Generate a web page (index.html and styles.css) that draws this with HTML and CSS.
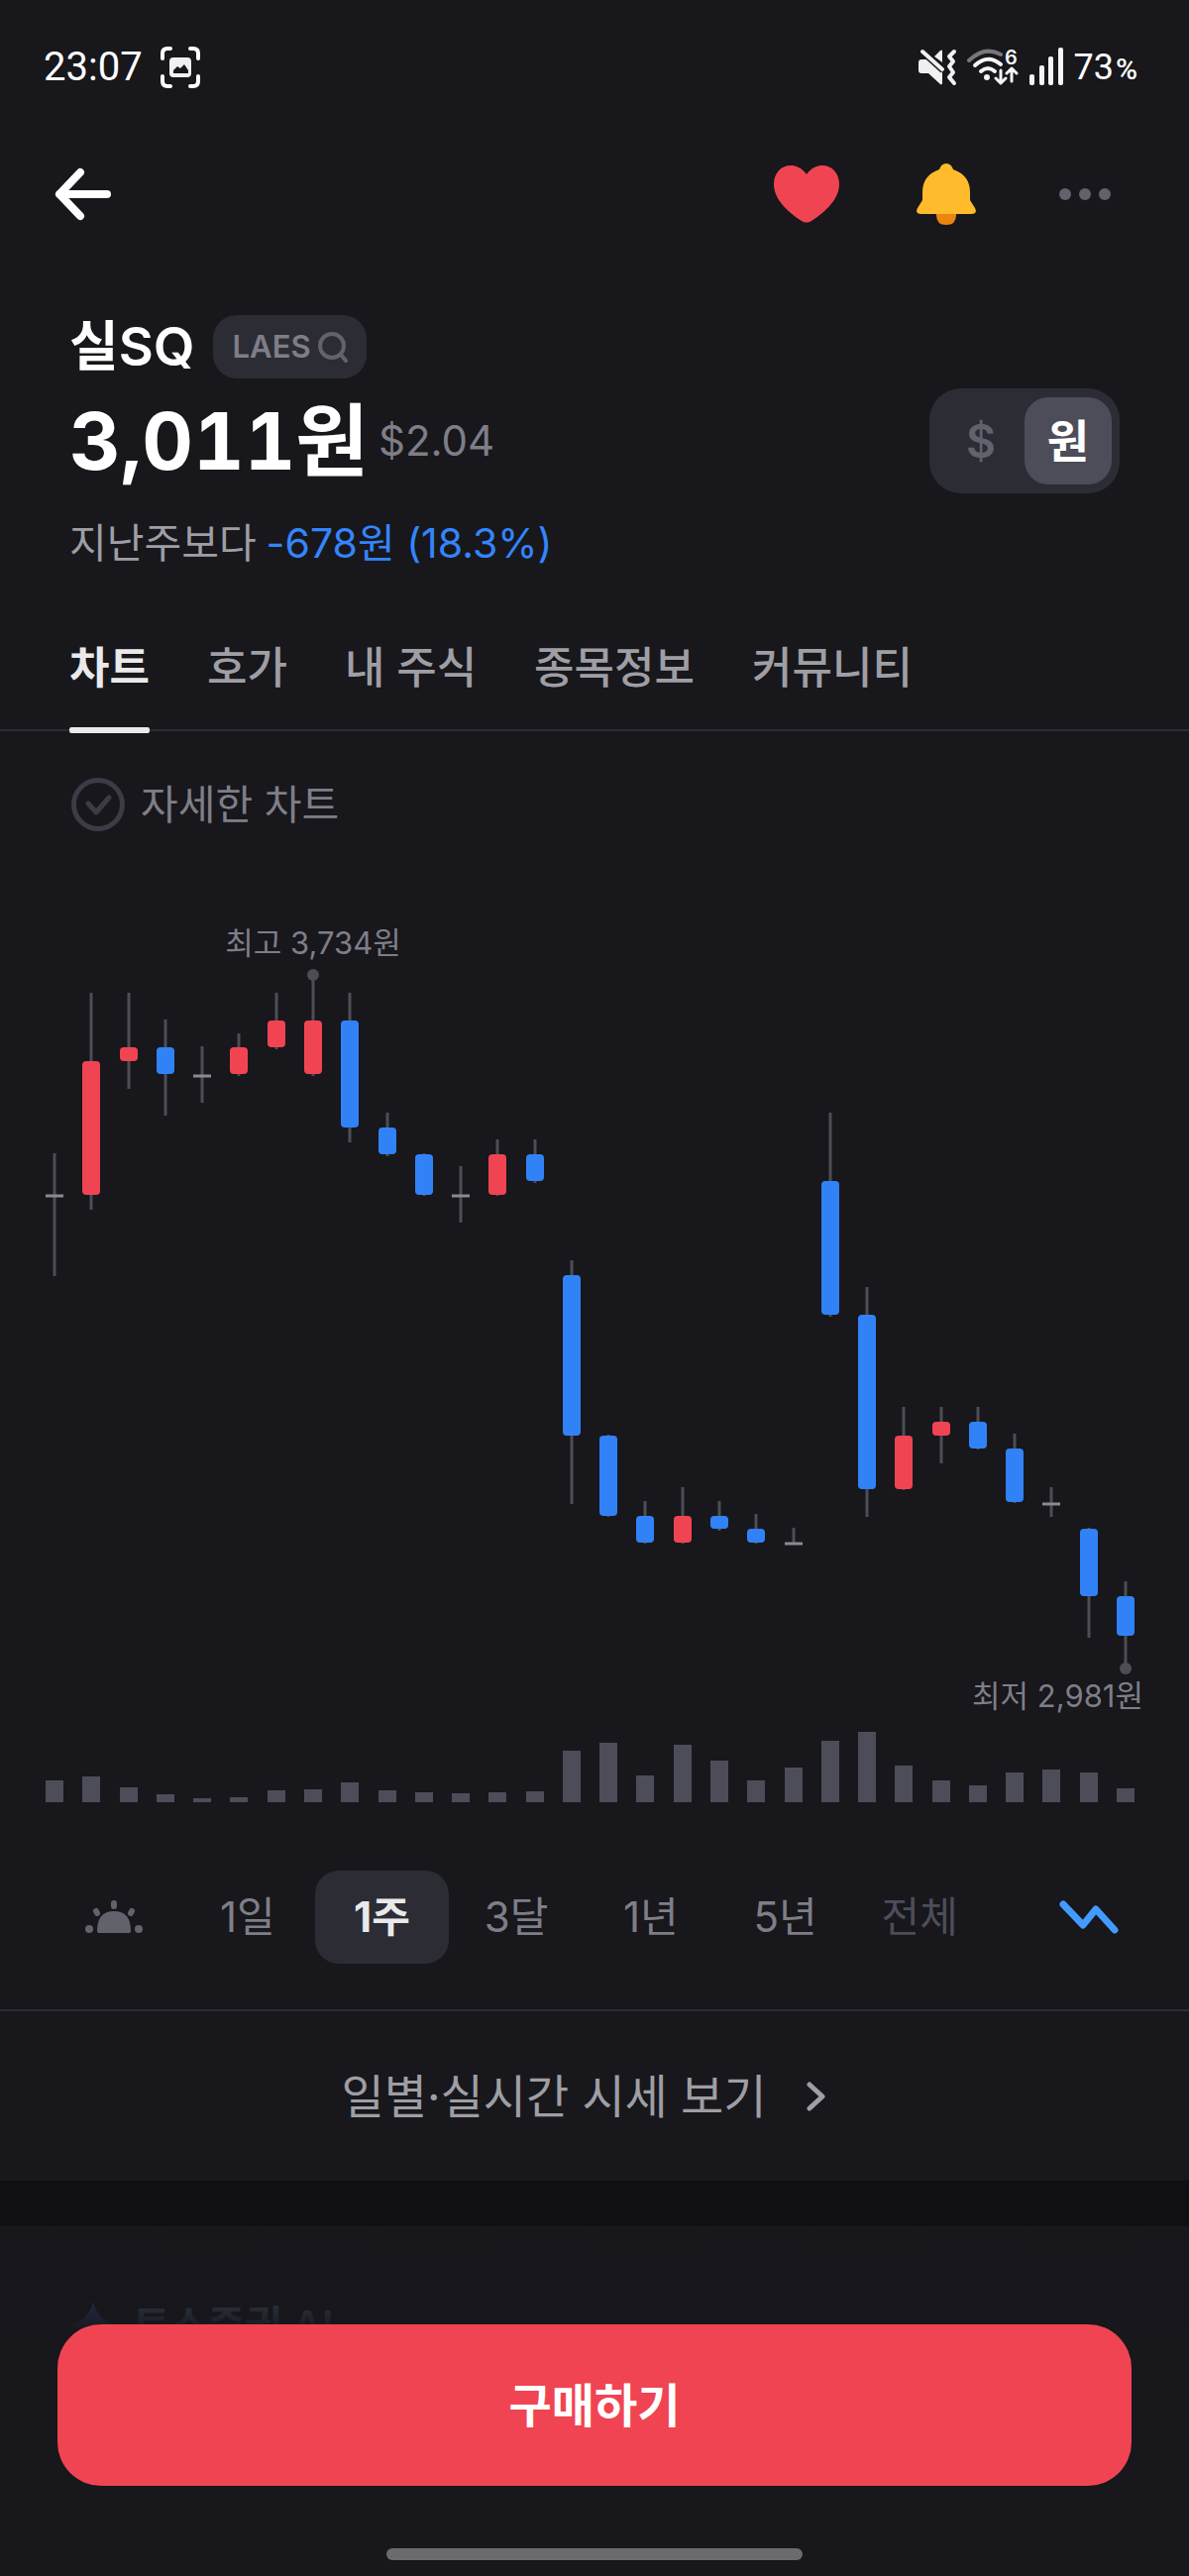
FILE: index.html
```html
<!DOCTYPE html>
<html lang="ko">
<head>
<meta charset="utf-8">
<meta name="viewport" content="width=device-width, initial-scale=1">
<title>실SQ</title>
<link rel="stylesheet" href="styles.css">
</head>
<body>
<div class="status">
  <div class="status-group">
    <span class="clock">23:07</span>
    <svg width="40" height="42" viewBox="0 0 40 42" fill="none" aria-hidden="true">
      <path d="M2 12V7q0-5 5-5h3M30 2h3q5 0 5 5v5M38 30v5q0 5-5 5h-3M10 40H7q-5 0-5-5v-5" stroke="#fff" stroke-width="4" stroke-linecap="round"/>
      <rect x="9" y="11" width="22" height="20" rx="4" fill="#f0f0f0"/>
      <path d="M13 27v-3l4-4 3 2 4-4 4 6v3z" fill="#17171c"/>
    </svg>
  </div>
  <div class="status-group status-right">
    <svg width="40" height="38" viewBox="0 0 40 38" aria-hidden="true">
      <path d="M1 14q0-3 3-3h6L25 20v15q0 2-2 1L11 25H4q-3 0-3-3zM25 2v12l-8-6 6-6q2-1 2 0z" fill="#f0f0f0"/>
      <path d="M5 3l21 19" stroke="#17171c" stroke-width="7"/>
      <path d="M5 3l20 18M37 3l-5 5 4 5-4 5 4 6-4 5 5 6" fill="none" stroke="#f0f0f0" stroke-width="4" stroke-linecap="round" stroke-linejoin="round"/>
    </svg>
    <svg width="54" height="46" viewBox="0 -4 54 46" fill="none" stroke-linecap="round" aria-hidden="true">
      <path d="M3 12Q19-3 35 6" stroke="#77777b" stroke-width="4"/>
      <path d="M9 17q13-12 26-1M15 23q7-6 14 0" stroke="#f5f5f5" stroke-width="4"/>
      <circle cx="21" cy="29" r="3" fill="#f5f5f5"/>
      <path d="M35 22v12M30 30l5 5 5-5M46 33V21M41 25l5-5 5 5" stroke="#f5f5f5" stroke-width="3" stroke-linejoin="round"/>
      <text class="wifi-gen" x="39" y="16">6</text>
    </svg>
    <svg width="36" height="40" viewBox="0 0 36 40" fill="#f5f5f5" aria-hidden="true">
      <rect x="1" y="27" width="5" height="11" rx="2"/><rect x="11" y="18" width="5" height="20" rx="2"/><rect x="20" y="9" width="5" height="29" rx="2"/><rect x="30" y="0" width="5" height="38" rx="2"/>
    </svg>
    <span class="battery">73<small>%</small></span>
  </div>
</div>

<header class="topbar">
  <button class="icon-btn" type="button" aria-label="뒤로">
    <svg width="60" height="56" viewBox="0 0 60 56" fill="none" stroke="#fff" stroke-width="8" stroke-linecap="round" stroke-linejoin="round"><path d="M27 6L6 28l21 22M6 28h48"/></svg>
  </button>
  <div class="topbar-actions">
    <button class="icon-btn" type="button" aria-label="관심">
      <svg width="66" height="58" viewBox="0 0 66 58"><path d="M33 9C38 2 44 0 49 0C59 0 66 8 66 19C66 34 52 47 38 56Q33 59 28 56C14 47 0 34 0 19C0 8 7 0 17 0C22 0 28 2 33 9Z" fill="#f04452"/></svg>
    </button>
    <button class="icon-btn" type="button" aria-label="알림">
      <svg width="60" height="62" viewBox="0 0 60 62"><path d="M20 48h20v4q0 10-10 10t-10-10z" fill="#ea860f"/><path d="M23 6q2-6 7-6t7 6Q54 12 54 29v8l5 8q3 6-4 6H5q-7 0-4-6l5-8v-8Q6 12 23 6z" fill="#ffbb2b"/></svg>
    </button>
    <button class="icon-btn" type="button" aria-label="더보기">
      <svg width="58" height="12" viewBox="-6 0 58 12" fill="#62626d"><circle cx="6" cy="6" r="6"/><circle cx="26" cy="6" r="6"/><circle cx="46" cy="6" r="6"/></svg>
    </button>
  </div>
</header>

<main>
  <section class="summary">
    <div class="name-row">
      <h1>실SQ</h1>
      <button class="ticker" type="button">LAES
        <svg width="32" height="32" viewBox="0 0 32 32" fill="none" stroke="#62626d" stroke-width="4" stroke-linecap="round" aria-hidden="true"><circle cx="15" cy="15" r="12"/><path d="M24 24l5 6"/></svg>
      </button>
    </div>
    <div class="price-row">
      <p class="price">3,011원 <span class="usd">$2.04</span></p>
      <div class="currency" role="group" aria-label="통화">
        <button type="button" aria-pressed="false">$</button>
        <button type="button" class="on" aria-pressed="true">원</button>
      </div>
    </div>
    <p class="change"><span>지난주보다</span><span class="down">-678원 (18.3%)</span></p>
  </section>

  <nav class="tabs">
    <a class="on" href="#chart">차트</a>
    <a href="#quote">호가</a>
    <a href="#mine">내 주식</a>
    <a href="#info">종목정보</a>
    <a href="#community">커뮤니티</a>
  </nav>

  <section id="chart">
    <label class="detail">
      <span class="check">
        <input type="checkbox">
        <svg width="28" height="22" viewBox="0 0 28 22" fill="none" stroke="#3c3c47" stroke-width="5" stroke-linecap="round" stroke-linejoin="round" aria-hidden="true"><path d="M4 10l8 9L25 4"/></svg>
      </span>
      자세한 차트
    </label>

    <svg class="plot" viewBox="0 840 1200 1000" role="img" aria-label="1주 시세 차트">
      <path class="wick" d="M55 1164V1288M92 1002V1221M130 1002V1099M167 1029V1126M204 1056V1113M241 1043V1086M279 1002V1059M316 984V1086M353 1002V1153M391 1123V1167M428 1164V1207M465 1177V1234M502 1150V1207M540 1150V1194M577 1272V1518M614 1448V1531M651 1515V1558M689 1501V1558M726 1515V1545M763 1528V1558M801 1542V1558M838 1123V1329M875 1299V1531M912 1420V1504M950 1420V1477M987 1420V1463M1024 1447V1517M1061 1501V1531M1099 1542V1653M1136 1596V1684"/>
      <circle class="dot" cx="316" cy="984" r="6"/>
      <circle class="dot" cx="1136" cy="1684" r="6"/>
      <path class="flat" d="M46 1207h18M195 1086h18M456 1207h18M792 1558h18M1052 1518h18"/>
      <g class="up">
        <rect x="83" y="1071" width="18" height="135" rx="4"/>
        <rect x="121" y="1057" width="18" height="14" rx="4"/>
        <rect x="232" y="1057" width="18" height="27" rx="4"/>
        <rect x="270" y="1030" width="18" height="27" rx="4"/>
        <rect x="307" y="1030" width="18" height="54" rx="4"/>
        <rect x="493" y="1165" width="18" height="41" rx="4"/>
        <rect x="680" y="1530" width="18" height="27" rx="4"/>
        <rect x="903" y="1449" width="18" height="54" rx="4"/>
        <rect x="941" y="1435" width="18" height="14" rx="4"/>
      </g>
      <g class="fall">
        <rect x="158" y="1057" width="18" height="27" rx="4"/>
        <rect x="344" y="1030" width="18" height="108" rx="4"/>
        <rect x="382" y="1138" width="18" height="27" rx="4"/>
        <rect x="419" y="1165" width="18" height="41" rx="4"/>
        <rect x="531" y="1165" width="18" height="27" rx="4"/>
        <rect x="568" y="1287" width="18" height="162" rx="4"/>
        <rect x="605" y="1449" width="18" height="81" rx="4"/>
        <rect x="642" y="1530" width="18" height="27" rx="4"/>
        <rect x="717" y="1530" width="18" height="13" rx="4"/>
        <rect x="754" y="1543" width="18" height="14" rx="4"/>
        <rect x="829" y="1192" width="18" height="135" rx="4"/>
        <rect x="866" y="1327" width="18" height="176" rx="4"/>
        <rect x="978" y="1435" width="18" height="27" rx="4"/>
        <rect x="1015" y="1462" width="18" height="54" rx="4"/>
        <rect x="1090" y="1543" width="18" height="68" rx="4"/>
        <rect x="1127" y="1611" width="18" height="40" rx="4"/>
      </g>
      <path class="volume" d="M55 1819V1797M92 1819V1793M130 1819V1804M167 1819V1811M204 1819V1815M241 1819V1814M279 1819V1807M316 1819V1806M353 1819V1799M391 1819V1807M428 1819V1809M465 1819V1810M502 1819V1809M540 1819V1808M577 1819V1767M614 1819V1759M651 1819V1792M689 1819V1761M726 1819V1777M763 1819V1797M801 1819V1784M838 1819V1757M875 1819V1748M912 1819V1782M950 1819V1797M987 1819V1802M1024 1819V1789M1061 1819V1786M1099 1819V1789M1136 1819V1805"/>
      <text class="mark" x="316" y="963" text-anchor="middle">최고 3,734원</text>
      <text class="mark" x="1154" y="1723" text-anchor="end">최저 2,981원</text>
    </svg>

    <div class="ranges">
      <button class="side" type="button" aria-label="장 시간">
        <svg width="58" height="34" viewBox="0 0 58 34" fill="#62626d"><path d="M12 31Q12 11 29 11T46 31q0 2-2 2H14q-2 0-2-2z"/><circle cx="4" cy="29" r="4"/><circle cx="54" cy="29" r="4"/><path d="M29 3v3M11 11l1 2M47 11l-1 2" stroke="#62626d" stroke-width="6" stroke-linecap="round"/></svg>
      </button>
      <div class="range-list" role="group" aria-label="기간">
        <button type="button">1일</button>
        <button type="button" class="on" aria-pressed="true">1주</button>
        <button type="button">3달</button>
        <button type="button">1년</button>
        <button type="button">5년</button>
        <button type="button" class="faded">전체</button>
      </div>
      <button class="side line-mode" type="button" aria-label="라인 차트">
        <svg width="60" height="34" viewBox="0 0 60 34" fill="none" stroke="#449bff" stroke-width="7" stroke-linecap="round" stroke-linejoin="round"><path d="M4 4l20 21L37 9l19 21"/></svg>
      </button>
    </div>
    <a class="daily" href="#daily">일별·실시간 시세 보기
      <svg width="20" height="32" viewBox="0 0 20 32" fill="none" stroke="#9e9ea4" stroke-width="5" stroke-linecap="round" stroke-linejoin="round" aria-hidden="true"><path d="M3 4l13 12L3 28"/></svg>
    </a>
  </section>

  <section class="ai">
    <h2>
      <svg width="44" height="48" viewBox="0 0 44 48" fill="#6c7bff" aria-hidden="true"><path d="M22 0q4 18 22 24-18 6-22 24-4-18-22-24Q18 18 22 0z"/></svg>
      토스증권 AI
    </h2>
  </section>
</main>

<footer class="dock">
  <button class="buy" type="button">구매하기</button>
  <div class="home-bar"></div>
</footer>
</body>
</html>
```
FILE: styles.css
```css
* { box-sizing: border-box; }

body {
  margin: 0;
  min-height: 100vh;
  background: #17171c;
  color: #fff;
  font-family: "Inter", "Noto Sans CJK KR", sans-serif;
  font-size: 42px;
  line-height: 56px;
}

h1, h2, p { margin: 0; }
svg { display: block; flex: none; }
a { color: inherit; text-decoration: none; }

button {
  margin: 0;
  padding: 0;
  border: 0;
  background: none;
  color: inherit;
  font: inherit;
}

/* system status */
.status {
  display: flex;
  justify-content: space-between;
  height: 96px;
  padding: 40px 52px 0 44px;
}
.status-group { display: flex; align-items: center; gap: 18px; }
.status-right { gap: 9px; }
.clock, .battery { font-family: "Roboto", sans-serif; font-size: 40px; }
.battery { font-size: 36px; }
.battery small { margin-left: 2px; font-size: 30px; font-weight: 500; line-height: 1; }
.wifi-gen { fill: #f5f5f5; font: 600 20px "Inter", sans-serif; }

/* top bar */
.topbar {
  display: flex;
  justify-content: space-between;
  align-items: center;
  height: 96px;
  margin-top: 52px;
  padding: 0 79px 0 54px;
}
.topbar-actions { display: flex; align-items: center; gap: 78px; }
.icon-btn { display: grid; place-items: center; }

/* name, price, change */
.summary { padding: 74px 70px 0; }
.name-row { display: flex; align-items: center; gap: 18px; }
.name-row h1 { font-size: 54px; font-weight: 600; line-height: 64px; }
.ticker {
  display: flex;
  align-items: center;
  gap: 6px;
  height: 64px;
  padding: 0 18px 0 20px;
  border-radius: 24px;
  background: #2c2c35;
  color: #7e7e87;
  font-size: 31px;
  font-weight: 600;
}
.price-row {
  display: flex;
  justify-content: space-between;
  align-items: center;
  margin-top: 10px;
}
.price {
  display: flex;
  align-items: center;
  gap: 10px;
  font-size: 80px;
  font-weight: 700;
  line-height: 106px;
  font-variant-numeric: tabular-nums;
  white-space: nowrap;
}
.usd {
  color: #7e7e87;
  font-size: 42px;
  font-weight: 400;
  font-variant-numeric: normal;
  line-height: 56px;
}
.currency {
  display: grid;
  grid-template-columns: 88px 88px;
  padding: 9px 8px;
  border-radius: 32px;
  background: #2c2c35;
}
.currency button {
  height: 88px;
  border-radius: 24px;
  color: #62626d;
  font-size: 46px;
  font-weight: 600;
}
.currency .on { background: #4d4d59; color: #fff; font-weight: 700; }
.change { display: flex; gap: 10px; margin-top: 22px; color: #9e9ea4; font-size: 41px; }
.down { color: #3485fa; }

/* tabs */
.tabs {
  display: flex;
  gap: 58px;
  margin-top: 70px;
  padding: 0 70px;
  border-bottom: 2px solid #2c2c35;
  color: #9e9ea4;
  font-size: 44px;
  font-weight: 500;
}
.tabs a { position: relative; padding-bottom: 34px; }
.tabs .on { color: #e9e9ea; font-weight: 700; }
.tabs .on::after {
  content: "";
  position: absolute;
  inset: auto 0 -4px;
  height: 6px;
  border-radius: 2px;
  background: #e9e9ea;
}

/* chart */
.detail {
  display: flex;
  align-items: center;
  gap: 16px;
  padding: 46px 72px 0;
  color: #7e7e87;
  font-size: 41px;
}
.check { display: grid; place-items: center; }
.check > * { grid-area: 1 / 1; }
.check input {
  appearance: none;
  width: 54px;
  height: 54px;
  margin: 0;
  border: 5px solid #3c3c47;
  border-radius: 50%;
}
.plot { width: 100%; height: auto; }
.wick { stroke: #4d4d55; stroke-width: 3; }
.dot { fill: #4d4d55; }
.flat { stroke: #8a8a90; stroke-width: 3; }
.up { fill: #f04452; }
.fall { fill: #3182f6; }
.volume { stroke: #4d4d59; stroke-width: 18; }
.mark { fill: #7e7e87; font-size: 31px; }

.ranges {
  display: flex;
  padding: 48px 34px 46px 47px;
  border-bottom: 2px solid #2c2c35;
  color: #7e7e87;
}
.side { display: grid; place-items: center; width: 135px; }
.line-mode { margin-left: 35px; }
.range-list { display: grid; flex: 1; grid-template-columns: repeat(6, 1fr); }
.range-list button { height: 94px; border-radius: 24px; }
.range-list .on { background: #2c2c35; color: #e9e9ea; font-weight: 700; }
.range-list .faded { color: #4d4d59; }

.daily {
  display: flex;
  justify-content: center;
  align-items: center;
  gap: 40px;
  padding: 58px 22px 57px 0;
  color: #9e9ea4;
  font-size: 47px;
}

.ai {
  padding: 72px 72px 200px;
  border-top: 46px solid #101013;
}
.ai h2 {
  display: flex;
  align-items: center;
  gap: 18px;
  color: #8fb0d8;
  font-size: 41px;
  font-weight: 600;
}

/* purchase dock */
.dock {
  position: fixed;
  inset: auto 0 0;
  display: grid;
  justify-items: center;
  gap: 63px;
  padding: 96px 58px 16px;
  background: linear-gradient(#17171c00, #17171cd8 76px, #17171c 104px);
}
.buy {
  width: 100%;
  height: 163px;
  border-radius: 44px;
  background: #f04452;
  font-size: 47px;
  font-weight: 600;
}
.home-bar { width: 420px; height: 12px; border-radius: 6px; background: #6b6b6e; }
```
